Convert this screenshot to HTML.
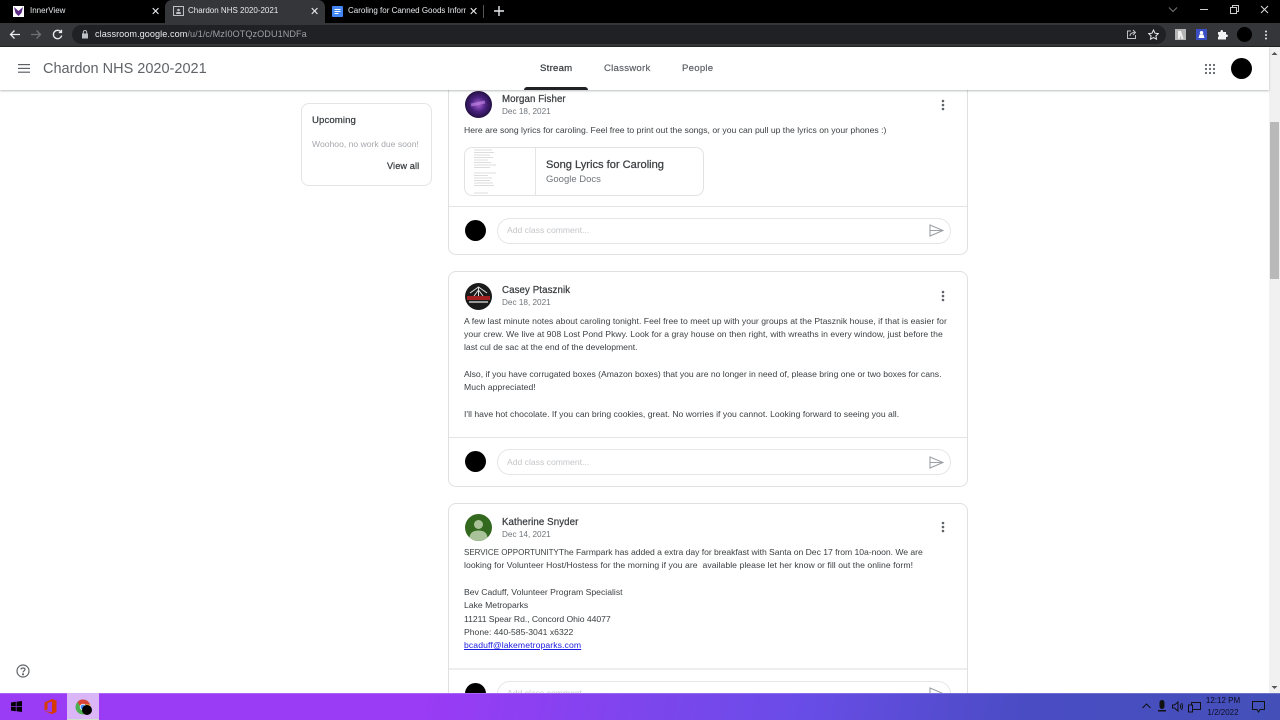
<!DOCTYPE html>
<html><head><meta charset="utf-8"><style>
*{box-sizing:border-box}
html,body{margin:0;padding:0;width:1280px;height:720px;overflow:hidden;background:#fff;font-family:"Liberation Sans",sans-serif}
#w{position:absolute;left:0;top:0;width:1280px;height:720px;overflow:hidden;background:#fff}
.a{position:absolute;white-space:nowrap}
.m{-webkit-text-stroke:.25px currentColor;letter-spacing:.1px}
.card{position:absolute;left:448px;width:520px;background:#fff;border:1px solid #e0e0e0;border-radius:8px}
.name{position:absolute;left:502px;font-size:9.7px;color:#3c4043;white-space:nowrap;-webkit-text-stroke:.25px #3c4043;letter-spacing:.1px}
.date{position:absolute;left:502px;font-size:8.2px;color:#70757a;white-space:nowrap}
.t{position:absolute;left:464px;font-size:8.65px;color:#3c4043;white-space:nowrap}
.hr{position:absolute;left:449px;width:518px;height:1px;background:#e4e4e4}
.dot{position:absolute;left:465px;width:21px;height:21px;border-radius:50%;background:#000}
.inp{position:absolute;left:497px;width:454px;height:26px;border:1px solid #e6e6e6;border-radius:13px;background:#fff}
.ph{position:absolute;left:507px;font-size:8.6px;color:#c4c6c9;white-space:nowrap}
.tab{position:absolute;font-size:8px;color:#e8eaed;white-space:nowrap}
</style></head><body><div id="w">
<!-- page -->
<div class="a" style="left:1269px;top:47px;width:11px;height:647px;background:#f1f1f1"></div>
<div class="a" style="left:1270px;top:122px;width:9px;height:157px;background:#b9b9b9"></div>

<!-- upcoming -->
<div class="a" style="left:301px;top:103px;width:131px;height:83px;border:1px solid #e4e4e4;border-radius:8px"></div>
<div class="a m" style="left:312px;top:115px;font-size:9.6px;color:#3c4043">Upcoming</div>
<div class="a" style="left:312px;top:139px;font-size:8.6px;color:#a5a8ac">Woohoo, no work due soon!</div>
<div class="a m" style="left:387px;top:161px;font-size:9.2px;color:#3c4043">View all</div>

<!-- card 1 -->
<div class="card" style="top:70px;height:185px"></div>
<svg class="a" style="left:465px;top:91px" width="27" height="27"><defs><radialGradient id="g" cx=".5" cy=".5" r=".6"><stop offset="0" stop-color="#a860d0"/><stop offset=".45" stop-color="#4a2280"/><stop offset="1" stop-color="#120828"/></radialGradient></defs><circle cx="13.5" cy="13.5" r="13.5" fill="url(#g)"/><path d="M6 14L20 11" stroke="#c48ae8" stroke-width="3" opacity=".6"/></svg>
<div class="name" style="top:94px">Morgan Fisher</div>
<div class="date" style="top:107px">Dec 18, 2021</div>
<div class="t" style="top:125px">Here are song lyrics for caroling. Feel free to print out the songs, or you can pull up the lyrics on your phones :)</div>
<div class="a" style="left:464px;top:147px;width:240px;height:49px;border:1px solid #e0e2e5;border-radius:8px"></div>
<div class="a" style="left:535px;top:148px;width:1px;height:47px;background:#e4e4e4"></div>
<svg class="a" style="left:472px;top:149px" width="30" height="46"><g stroke="#bbb" stroke-width=".5"><path d="M2 1h18M2 3.500h20M2 6h16M2 8.500h19M2 11h14M2 13.500h17M2 16h22M2 18.500h16M2 24h22M2 26.500h14M2 29h18M2 31.500h16M2 34h19M2 36.500h20M2 44h14"/></g></svg>
<div class="a" style="left:546px;top:159px;font-size:11.1px;color:#3c4043;-webkit-text-stroke:.25px #3c4043">Song Lyrics for Caroling</div>
<div class="a" style="left:546px;top:174px;font-size:9.5px;color:#70757a">Google Docs</div>
<div class="hr" style="top:206px"></div>
<div class="dot" style="top:220px"></div>
<div class="inp" style="top:218px"></div>
<div class="ph" style="top:225px">Add class comment...</div>

<!-- card 2 -->
<div class="card" style="top:271px;height:216px"></div>
<svg class="a" style="left:465px;top:283px" width="27" height="27"><circle cx="13.500" cy="13.500" r="13.500" fill="#1a1a1a"/><path d="M5 10L13.500 4L22 10M13.500 4V13M9 13L13.500 7L18 13" stroke="#ddd" stroke-width="1" fill="none"/><rect x="2" y="13" width="23" height="4" fill="#a32020"/><rect x="4" y="18" width="19" height="2" fill="#999"/></svg>
<div class="name" style="top:285px">Casey Ptasznik</div>
<div class="date" style="top:298px">Dec 18, 2021</div>
<div class="t" style="top:316px;letter-spacing:.03px">A few last minute notes about caroling tonight. Feel free to meet up with your groups at the Ptasznik house, if that is easier for</div>
<div class="t" style="top:329px;letter-spacing:.04px">your crew. We live at 908 Lost Pond Pkwy. Look for a gray house on then right, with wreaths in every window, just before the</div>
<div class="t" style="top:342px">last cul de sac at the end of the development.</div>
<div class="t" style="top:369px;letter-spacing:-.016px">Also, if you have corrugated boxes (Amazon boxes) that you are no longer in need of, please bring one or two boxes for cans.</div>
<div class="t" style="top:382px;letter-spacing:.05px">Much appreciated!</div>
<div class="t" style="top:409px;letter-spacing:.017px">I'll have hot chocolate. If you can bring cookies, great. No worries if you cannot. Looking forward to seeing you all.</div>
<div class="hr" style="top:437px"></div>
<div class="dot" style="top:451px"></div>
<div class="inp" style="top:449px"></div>
<div class="ph" style="top:457px">Add class comment...</div>

<!-- card 3 -->
<div class="card" style="top:503px;height:240px"></div>
<svg class="a" style="left:465px;top:514px" width="27" height="27"><circle cx="13.500" cy="13.500" r="13.500" fill="#33691e"/><circle cx="13.500" cy="10.500" r="4.500" fill="#a9c29a"/><path d="M4.500 23.500C5 18 9 16.500 13.500 16.500S22 18 22.500 23.500A13.500 13.500 0 0 1 4.500 23.500Z" fill="#a9c29a"/></svg>
<div class="name" style="top:517px">Katherine Snyder</div>
<div class="date" style="top:530px">Dec 14, 2021</div>
<div class="t" style="top:547px"><span style="font-size:8px">SERVICE OPPORTUNITY</span><span style="letter-spacing:-.04px">The Farmpark has added a extra day for breakfast with Santa on Dec 17 from 10a-noon. We are</span></div>
<div class="t" style="top:560px;letter-spacing:.05px">looking for Volunteer Host/Hostess for the morning if you are&nbsp; available please let her know or fill out the online form!</div>
<div class="t" style="top:587px">Bev Caduff, Volunteer Program Specialist</div>
<div class="t" style="top:600px">Lake Metroparks</div>
<div class="t" style="top:614px;letter-spacing:-.05px">11211 Spear Rd., Concord Ohio 44077</div>
<div class="t" style="top:627px">Phone: 440-585-3041 x6322</div>
<div class="t" style="top:640px;color:#1a1ae0;text-decoration:underline;letter-spacing:.1px">bcaduff@lakemetroparks.com</div>
<div class="hr" style="top:668px;background:#eee;height:2px"></div>
<div class="dot" style="top:683px"></div>
<div class="inp" style="top:681px"></div>
<div class="ph" style="top:688px">Add class comment...</div>

<!-- kebabs -->
<svg class="a" style="left:940px;top:99px" width="6" height="12" fill="#5f6368"><circle cx="3" cy="2" r="1.300"/><circle cx="3" cy="6" r="1.300"/><circle cx="3" cy="10" r="1.300"/></svg>
<svg class="a" style="left:940px;top:290px" width="6" height="12" fill="#5f6368"><circle cx="3" cy="2" r="1.300"/><circle cx="3" cy="6" r="1.300"/><circle cx="3" cy="10" r="1.300"/></svg>
<svg class="a" style="left:940px;top:521px" width="6" height="12" fill="#5f6368"><circle cx="3" cy="2" r="1.300"/><circle cx="3" cy="6" r="1.300"/><circle cx="3" cy="10" r="1.300"/></svg>
<!-- send -->
<svg class="a" style="left:929px;top:224px" width="15" height="13" fill="none" stroke="#9aa0a6" stroke-width="1.100"><path d="M1 1L14 6.500L1 12ZM1 6.500H14"/></svg>
<svg class="a" style="left:929px;top:456px" width="15" height="13" fill="none" stroke="#9aa0a6" stroke-width="1.100"><path d="M1 1L14 6.500L1 12ZM1 6.500H14"/></svg>
<svg class="a" style="left:929px;top:687px" width="15" height="13" fill="none" stroke="#9aa0a6" stroke-width="1.100"><path d="M1 1L14 6.500L1 12ZM1 6.500H14"/></svg>

<!-- help -->
<svg class="a" style="left:16px;top:664px" width="14" height="14" fill="none" stroke="#5f6368" stroke-width="1.200"><circle cx="7" cy="7" r="6"/><path d="M5 5.500C5 3.500 9 3.500 9 5.500C9 7 7 6.800 7 8.500"/><circle cx="7" cy="10.300" r=".5" fill="#5f6368"/></svg>

<!-- app bar -->
<div class="a" style="left:0;top:47px;width:1269px;height:43px;background:#fff;box-shadow:0 1px 2px rgba(60,64,67,.35)"></div>
<svg class="a" style="left:18px;top:64px" width="12" height="9" fill="#5f6368"><rect y="0" width="12" height="1.200"/><rect y="3.800" width="12" height="1.200"/><rect y="7.600" width="12" height="1.200"/></svg>
<div class="a" style="left:43px;top:61px;font-size:14.500px;color:#5f6368">Chardon NHS 2020-2021</div>
<div class="a" style="left:540px;top:63px;font-size:9.600px;color:#3c4043;-webkit-text-stroke:.25px #3c4043;letter-spacing:.25px">Stream</div>
<div class="a" style="left:604px;top:63px;font-size:9.600px;color:#5f6368;-webkit-text-stroke:.2px #5f6368;letter-spacing:.25px">Classwork</div>
<div class="a" style="left:682px;top:63px;font-size:9.600px;color:#5f6368;-webkit-text-stroke:.2px #5f6368;letter-spacing:.25px">People</div>
<div class="a" style="left:524px;top:87px;width:64px;height:3px;background:#202124;border-radius:3px 3px 0 0"></div>
<svg class="a" style="left:1204px;top:63px" width="12" height="12" fill="#5f6368"><circle cx="2" cy="2" r="1.100"/><circle cx="6" cy="2" r="1.100"/><circle cx="10" cy="2" r="1.100"/><circle cx="2" cy="6" r="1.100"/><circle cx="6" cy="6" r="1.100"/><circle cx="10" cy="6" r="1.100"/><circle cx="2" cy="10" r="1.100"/><circle cx="6" cy="10" r="1.100"/><circle cx="10" cy="10" r="1.100"/></svg>
<div class="a" style="left:1231px;top:58px;width:21px;height:21px;border-radius:50%;background:#000"></div>

<!-- chrome -->
<div class="a" style="left:0;top:0;width:1280px;height:23px;background:#000"></div>
<div class="a" style="left:0;top:23px;width:1280px;height:24px;background:#35363a;border-bottom:1px solid #222"></div>
<div class="a" style="left:165px;top:0;width:160px;height:24px;background:#35363a;border-radius:7px 7px 0 0"></div>
<svg class="a" style="left:13px;top:6px" width="11" height="11"><rect width="11" height="11" fill="#fff"/><path d="M1 1L5.500 5L10 1L8.500 7L5.500 10L2.500 7Z" fill="#5b2a86"/></svg>
<div class="tab" style="left:30px;top:6px">InnerView</div>
<div class="a" style="left:151px;top:5px;font-size:11px;color:#e8eaed">✕</div>
<svg class="a" style="left:173px;top:6px" width="11" height="10" fill="none" stroke="#bdc1c6"><rect x=".5" y=".5" width="10" height="9"/><path d="M3 8L3.500 6H7.500L8 8Z" fill="#bdc1c6" stroke="none"/><circle cx="5.500" cy="4" r="1.300" fill="#bdc1c6" stroke="none"/></svg>
<div class="tab" style="left:188px;top:6px">Chardon NHS 2020-2021</div>
<div class="a" style="left:310px;top:5px;font-size:11px;color:#e8eaed">✕</div>
<svg class="a" style="left:332px;top:6px" width="11" height="11"><rect width="11" height="11" rx="1" fill="#4285f4"/><path d="M2.500 3.500H8.500M2.500 5.500H8.500M2.500 7.500H6.500" stroke="#fff"/></svg>
<div class="tab" style="left:348px;top:6px;width:118px;overflow:hidden">Caroling for Canned Goods Information</div>
<div class="a" style="left:469px;top:5px;font-size:11px;color:#e8eaed">✕</div>
<div class="a" style="left:483px;top:5px;width:1px;height:13px;background:#555"></div>
<svg class="a" style="left:494px;top:6px" width="10" height="10" stroke="#e8eaed" stroke-width="1.400"><path d="M5 0V10M0 5H10"/></svg>
<!-- window controls -->
<svg class="a" style="left:1168px;top:6px" width="10" height="8" fill="none" stroke="#777"><path d="M1 1.500L5 5.500L9 1.500"/></svg>
<div class="a" style="left:1200px;top:9px;width:8px;height:1px;background:#ccc"></div>
<svg class="a" style="left:1230px;top:5px" width="9" height="9" fill="none" stroke="#ccc"><rect x=".5" y="2.500" width="6" height="6"/><path d="M2.500 2.500V.5H8.500V6.500H6.500"/></svg>
<svg class="a" style="left:1260px;top:5px" width="9" height="9" stroke="#ddd"><path d="M1 1L8 8M8 1L1 8"/></svg>
<!-- nav -->
<svg class="a" style="left:9px;top:29px" width="11" height="11" fill="none" stroke="#e8eaed" stroke-width="1.300"><path d="M11 5.500H1.500M5.500 1.500L1.500 5.500L5.500 9.500"/></svg>
<svg class="a" style="left:31px;top:29px" width="11" height="11" fill="none" stroke="#6f7175" stroke-width="1.300"><path d="M0 5.500H9.500M5.500 1.500L9.500 5.500L5.500 9.500"/></svg>
<svg class="a" style="left:52px;top:29px" width="11" height="11" fill="none" stroke="#e8eaed" stroke-width="1.300"><path d="M9 3A4.200 4.200 0 1 0 9.700 6.500M9.500 .8V3.500H6.800"/></svg>
<div class="a" style="left:72px;top:25px;width:1094px;height:19px;border-radius:10px;background:#202124"></div>
<svg class="a" style="left:81px;top:30px" width="8" height="9"><rect x="1" y="3.500" width="6" height="5" fill="#bdc1c6"/><path d="M2.300 3.500V2.200A1.700 1.700 0 0 1 5.700 2.200V3.500" fill="none" stroke="#bdc1c6"/></svg>
<div class="a" style="left:95px;top:29px;font-size:9.100px;color:#9aa0a6;letter-spacing:.07px"><span style="color:#e8eaed">classroom.google.com</span>/u/1/c/MzI0OTQzODU1NDFa</div>
<svg class="a" style="left:1126px;top:29px" width="11" height="11" fill="none" stroke="#bdc1c6"><path d="M5 2H1.500V9.500H9.500V6M4 7C4 4.500 6 3.500 9 3.500M7 1L9.500 3.500L7 6"/></svg>
<svg class="a" style="left:1148px;top:29px" width="11" height="11" fill="none" stroke="#e8eaed"><path d="M5.500 1L7 4.200L10.300 4.600L7.900 6.900L8.500 10.200L5.500 8.600L2.500 10.200L3.100 6.900L.7 4.600L4 4.200Z"/></svg>
<div class="a" style="left:1175px;top:29px;width:11px;height:11px;background:#b5b5b5"></div>
<svg class="a" style="left:1177px;top:31px" width="7" height="8" fill="#eee"><path d="M1 0H4L5 3L6.500 8H4.500L3.500 4.500L2.500 8H1Z"/></svg>
<div class="a" style="left:1196px;top:29px;width:11px;height:11px;background:#3b4fc4"></div>
<svg class="a" style="left:1198px;top:31px" width="7" height="7" fill="#fff"><circle cx="3.500" cy="1.700" r="1.700"/><path d="M1.500 3.500H5.500L6.500 7H.5Z"/></svg>
<svg class="a" style="left:1217px;top:29px" width="11" height="11" fill="#f1f3f4"><path d="M1 3H3.500V2A1.300 1.300 0 0 1 6 2V3H9V5.500H10A1.300 1.300 0 0 1 10 8H9V10.500H1V8A1.300 1.300 0 0 0 1 5.500Z"/></svg>
<div class="a" style="left:1237px;top:27px;width:15px;height:15px;border-radius:50%;background:#000"></div>
<svg class="a" style="left:1264px;top:30px" width="4" height="10" fill="#e8eaed"><circle cx="2" cy="1.500" r="1"/><circle cx="2" cy="5" r="1"/><circle cx="2" cy="8.500" r="1"/></svg>
<svg class="a" style="left:1271px;top:51px" width="7" height="5" fill="#555"><path d="M3.500 1L6.500 4H.5Z"/></svg>
<svg class="a" style="left:1271px;top:685px" width="7" height="5" fill="#555"><path d="M.5 1H6.500L3.500 4Z"/></svg>

<!-- taskbar -->
<div class="a" style="left:0;top:693px;width:1280px;height:27px;background:linear-gradient(100deg,#9a3bf5 0%,#9a3bf5 33%,#6a4ce8 62%,#4a4cc4 80%,#4450b8 100%)"></div>
<div class="a" style="left:0;top:693px;width:1280px;height:1px;background:rgba(255,255,255,.2)"></div>
<svg class="a" style="left:11px;top:701px" width="11" height="11" fill="#000"><path d="M0 1.500L4.800 .8V5.200H0ZM5.500 .7L11 0V5.200H5.500ZM0 5.900H4.800V10.300L0 9.600ZM5.500 5.900H11V11L5.500 10.300Z"/></svg>
<svg class="a" style="left:44px;top:699px" width="13" height="15"><path d="M8 0L12.500 1.500V13L8 15L.5 12.200L8 13V2.500L3.500 4V10.500L.5 11.500V3.500Z" fill="#d83b01"/></svg>
<div class="a" style="left:67px;top:693px;width:32px;height:27px;background:#dbb6f7;border-bottom:1px solid #cfe0c8"></div>
<svg class="a" style="left:75px;top:699px" width="18" height="17"><circle cx="8" cy="8" r="7.500" fill="#4caf50"/><path d="M8 .5A7.500 7.500 0 0 1 15 5.500H8A3 3 0 0 0 5 7L2.500 3A7.500 7.500 0 0 1 8 .5Z" fill="#db4437"/><path d="M15 5.500A7.500 7.500 0 0 1 9 15.500L11 10A3 3 0 0 0 11 5.500Z" fill="#fbc02d"/><circle cx="8" cy="8" r="2.800" fill="#4285f4" stroke="#fff" stroke-width=".8"/><circle cx="12" cy="11" r="5" fill="#000"/></svg>
<svg class="a" style="left:1142px;top:703px" width="9" height="6" fill="none" stroke="#111"><path d="M.5 5L4.500 1L8.500 5"/></svg>
<svg class="a" style="left:1158px;top:700px" width="8" height="13" fill="#111"><rect x="1.500" y="0" width="5" height="9" rx="2.500"/><rect x="0" y="10" width="8" height="1.500"/></svg>
<svg class="a" style="left:1172px;top:701px" width="11" height="11" fill="none" stroke="#111"><path d="M.5 4H2.500L6 1V10L2.500 7H.5ZM8 3.500Q9.500 5.500 8 7.500M9.500 2Q11.500 5.500 9.500 9"/></svg>
<svg class="a" style="left:1188px;top:702px" width="13" height="11" fill="none" stroke="#111"><rect x="3.500" y=".5" width="9" height="7"/><rect x=".5" y="3" width="4" height="7" fill="#4a4cc4"/></svg>
<div class="a" style="left:1201px;top:696px;width:44px;text-align:center;font-size:8px;color:#0d0d20">12:12 PM</div>
<div class="a" style="left:1201px;top:708px;width:44px;text-align:center;font-size:8px;color:#0d0d20">1/2/2022</div>
<svg class="a" style="left:1252px;top:701px" width="13" height="12" fill="none" stroke="#111"><path d="M.5 .5H12.500V8.500H8L6.500 11L5 8.500H.5Z"/></svg>
</div></body></html>
